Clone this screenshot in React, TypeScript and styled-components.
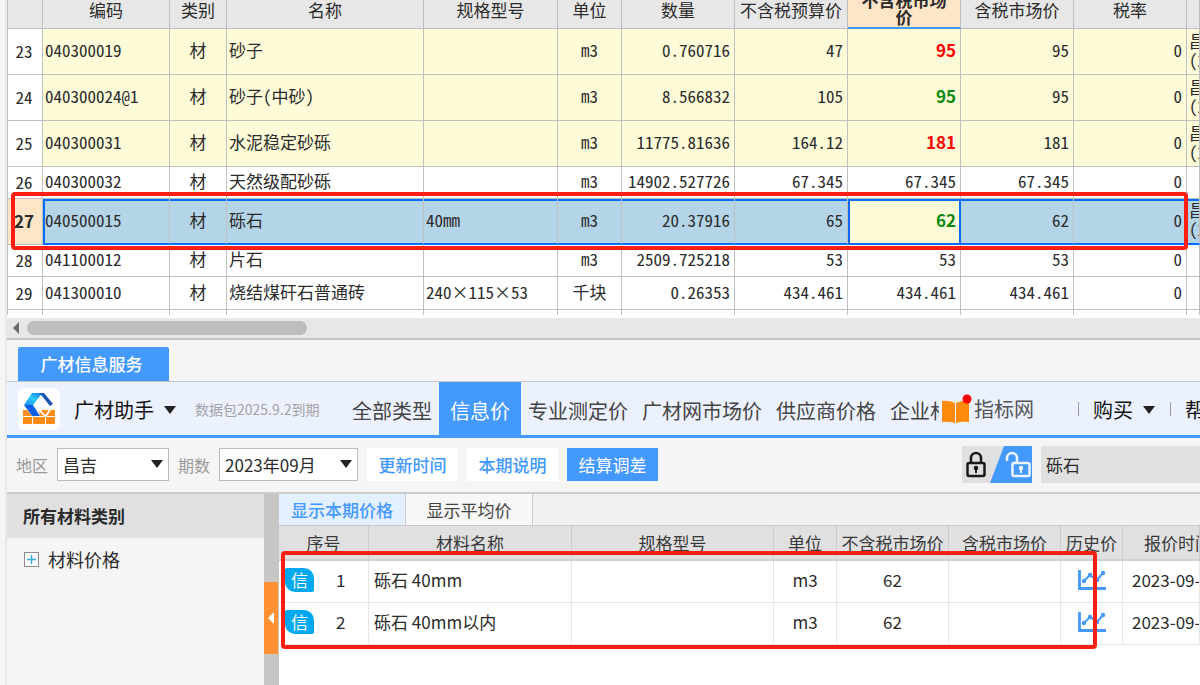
import React from 'react';
import styled, { createGlobalStyle, css } from 'styled-components';

const blue = '#4499ff';
const focus = '#0a6cff';
const grid = '#c0c0c0';

const GlobalStyle = createGlobalStyle`
  *, *::before, *::after { box-sizing: border-box; }
  body {
    margin: 0;
    background: #f5f5f5;
    color: #2b2b2b;
    font: 17px/20px "Noto Sans CJK SC", sans-serif;
    overflow: hidden;
  }
  button, input, select { font: inherit; color: inherit; border: 0; padding: 0; margin: 0; border-radius: 0; }
  button { cursor: pointer; background: none; white-space: nowrap; }
`;

const Window = styled.div`
  display: flex;
  flex-direction: column;
  min-height: 100vh;
  border-left: 5px solid #f5f5f5;
  box-shadow: inset 2px 0 #e9e9e9;
  padding-left: 2px;
  overflow: hidden;
`;

/* ---------- Quantity sheet ---------- */

const Sheet = styled.section`
  position: relative;
  overflow: hidden;
  background: #fff;
  padding-bottom: 3px;
`;

const SheetTable = styled.table`
  width: 100%;
  margin-top: -9px;
  table-layout: fixed;
  border-collapse: separate;
  border-spacing: 0;
  border-left: 1px solid ${grid};
  line-height: 19px;
  font-feature-settings: "hwid";
`;

const Col = styled.col<{ $w?: number }>`
  width: ${(p) => (p.$w ? `${p.$w}px` : 'auto')};
`;

const SheetHead = styled.th<{ $active?: boolean }>`
  height: 38px;
  padding: 0 0 1px;
  overflow: hidden;
  font-weight: 400;
  line-height: 17px;
  background: #e7e7e7;
  border-right: 1px solid ${grid};
  border-bottom: 1px solid ${grid};
  ${(p) =>
    p.$active &&
    css`
      font-weight: 700;
      background: #ffe5c8;
      border-bottom: 2px solid ${blue};
      padding: 0 10px 2px;
    `}
`;

type Tone = 'plain' | 'tinted' | 'selected';
const rowTone: Record<Tone, string> = { plain: '#fff', tinted: '#fefbd8', selected: '#b4d4e7' };

const SheetRow = styled.tr<{ $h: number; $tone: Tone }>`
  & > * {
    height: ${(p) => p.$h}px;
    background: ${(p) => rowTone[p.$tone]};
  }
  ${(p) =>
    p.$tone === 'selected' &&
    css`
      && > td {
        border-bottom: 2px solid ${focus};
        box-shadow: inset 0 2px ${focus};
      }
    `}
`;

const cellBase = css`
  padding: 0 4px 4px 2px;
  overflow: hidden;
  white-space: nowrap;
  border-right: 1px solid ${grid};
  border-bottom: 1px solid ${grid};
`;

const SheetCell = styled.td<{ $align?: 'left' | 'center' | 'right'; $first?: boolean }>`
  ${cellBase}
  text-align: ${(p) => p.$align ?? 'left'};
  ${(p) => p.$first && css`border-left: 2px solid ${focus}; padding-left: 0;`}
`;

const CenterCell = styled(SheetCell)`
  padding: 0 2px 4px;
  text-align: center;
`;

const RowNumber = styled.th<{ $active: boolean }>`
  ${cellBase}
  padding: 0 2px 2px 0;
  font-weight: 400;
  && { background: #fff; }
  ${(p) =>
    p.$active &&
    css`
      font-weight: 700;
      font-feature-settings: normal;
      && { background: #ffe5c8; }
    `}
`;

const PriceCell = styled(SheetCell)<{ $color?: string; $editing?: boolean }>`
  ${(p) =>
    p.$color &&
    css`
      color: ${p.$color};
      font-weight: 700;
      font-feature-settings: normal;
    `}
  ${(p) =>
    p.$editing &&
    css`
      &&& {
        background: #fefbd8;
        box-shadow: inset 2px 2px ${focus}, inset -1px 0 ${focus};
        border-right-color: ${focus};
      }
    `}
`;

const BlankCell = styled.td`
  height: 5px;
  padding: 0;
  border-right: 1px solid ${grid};
`;

const FullWidth = styled.span`
  display: inline-block;
  width: 17px;
  text-align: center;
`;

const Marker = styled.div`
  position: absolute;
  border: 4px solid #ff1f12;
  border-radius: 4px;
  pointer-events: none;
`;

const SheetMarker = styled(Marker)`
  left: 4px;
  right: 12px;
  top: 192px;
  height: 58px;
`;

const ScrollTrack = styled.div`
  display: flex;
  align-items: center;
  gap: 7px;
  height: 22px;
  padding-left: 5px;
  background: #e7e7e7;
  border-bottom: 2px solid #c3c3c3;
`;

const ScrollThumb = styled.div`
  width: 280px;
  height: 14px;
  border-radius: 7px;
  background: #bdbdbd;
`;

/* ---------- Info service panel ---------- */

const PanelTabs = styled.div`
  display: flex;
  align-items: flex-end;
  height: 42px;
  padding-left: 11px;
  border-bottom: 1px solid #c3c5cc;
`;

const PanelTab = styled.button`
  width: 151px;
  height: 34px;
  padding-right: 4px;
  border-radius: 2px 2px 0 0;
  background: ${blue};
  color: #fff;
  font-weight: 500;
`;

const NavBar = styled.header`
  display: flex;
  align-items: center;
  height: 56px;
  padding-left: 11px;
  background: #ecf1ff;
  border-bottom: 3px solid ${blue};
  font-size: 20px;
  white-space: nowrap;
  overflow: hidden;
`;

const LogoBox = styled.span`
  display: flex;
  flex: none;
  align-items: center;
  justify-content: center;
  width: 42px;
  height: 42px;
  border-radius: 6px;
  background: #fff;
`;

const MenuButton = styled.button`
  display: flex;
  flex: none;
  align-items: center;
  gap: 10px;
  margin-left: 14px;
  padding-top: 2px;
  color: #111;
`;

const Expiry = styled.span`
  flex: none;
  width: 150px;
  margin-left: 19px;
  font-size: 14px;
  color: #a3a3a6;
`;

const NavTabs = styled.nav`
  display: flex;
  flex: none;
  align-self: stretch;
  width: 594px;
  margin-right: 2px;
  overflow: hidden;
`;

const NavTab = styled.button<{ $active?: boolean }>`
  flex: none;
  padding: 4px ${(p) => (p.$active ? 11 : 7)}px 0;
  color: #444;
  ${(p) => p.$active && css`background: ${blue}; color: #fff;`}
`;

const IndexLink = styled.a`
  display: flex;
  flex: none;
  align-items: center;
  gap: 2px;
  color: #555;
  text-decoration: none;
`;

const NavEnd = styled.div`
  display: flex;
  flex: none;
  align-items: center;
  margin-left: 44px;
`;

const Divider = styled.span`
  width: 1px;
  height: 14px;
  background: #999;

  &:not(:first-child) { margin-left: 15px; }
`;

const Toolbar = styled.div`
  display: flex;
  align-items: center;
  height: 56px;
  padding: 0 0 1px 9px;
  gap: 9px;
  border-bottom: 2px solid #cbcbcb;
  white-space: nowrap;
`;

const FieldLabel = styled.label`
  flex: none;
  font-size: 16px;
  color: #999;
`;

const SelectWrap = styled.span<{ $w: number }>`
  position: relative;
  flex: none;
  width: ${(p) => p.$w}px;

  svg {
    position: absolute;
    right: 6px;
    top: 12px;
    pointer-events: none;
  }
`;

const Select = styled.select`
  appearance: none;
  display: block;
  width: 100%;
  height: 33px;
  padding-left: 5px;
  border: 1px solid #bcbcbc;
  background: #fff;
`;

const ToolButton = styled.button<{ $primary?: boolean }>`
  flex: none;
  width: 91px;
  height: 33px;
  background: ${(p) => (p.$primary ? blue : '#fff')};
  color: ${(p) => (p.$primary ? '#fff' : blue)};
  font-weight: ${(p) => (p.$primary ? 400 : 500)};
`;

const LockSwitch = styled.button`
  flex: none;
  width: 70px;
  height: 37px;
  margin-left: auto;
  background: #e0e0e0;

  svg { display: block; }
`;

const Search = styled.input`
  flex: none;
  width: 159px;
  height: 37px;
  padding-left: 5px;
  background: #e0e0e0;
`;

const Body = styled.div`
  display: flex;
  flex: 1;
`;

const Sidebar = styled.aside`
  flex: none;
  width: 257px;
`;

const SidebarTitle = styled.h2`
  margin: 0;
  padding: 12px 16px;
  font-size: 17px;
  line-height: 20px;
  background: #e0e0e0;
`;

const TreeItem = styled.button`
  display: flex;
  align-items: center;
  gap: 9px;
  padding: 11px 17px;
  font-size: 18px;
`;

const Splitter = styled.div`
  flex: none;
  width: 15px;
  padding-top: 88px;
  background: #c8c6c5;
`;

const Collapse = styled.button`
  display: flex;
  align-items: center;
  justify-content: center;
  width: 14px;
  height: 72px;
  background: #ff9133;
`;

const Content = styled.main`
  position: relative;
  flex: 1;
  min-width: 0;
  overflow: hidden;
  background: #fff;
`;

const ViewTabs = styled.div`
  display: flex;
  height: 32px;
  background: #f1f1f1;
  border-bottom: 1px solid #cbcbcb;
`;

const ViewTab = styled.button<{ $active?: boolean }>`
  width: 127px;
  border-right: 1px solid #cbcbcb;
  background: ${(p) => (p.$active ? '#e3f0ff' : '#f7f7f7')};
  color: ${(p) => (p.$active ? blue : '#444')};
  font-weight: ${(p) => (p.$active ? 500 : 400)};
`;

const PriceTable = styled.table`
  width: 100%;
  table-layout: fixed;
  border-collapse: separate;
  border-spacing: 0;
  white-space: nowrap;
`;

const PriceHead = styled.th<{ $indent?: boolean }>`
  height: 35px;
  padding: 0;
  font-weight: 400;
  background: #e0e0e0;
  color: #3a3a3a;
  border-right: 1px solid #cbcbcb;
  border-bottom: 2px solid #cfcfcf;
  ${(p) => p.$indent && css`text-align: left; padding-left: 21px; overflow: hidden;`}
`;

const PriceData = styled.td<{ $left?: boolean; $pad?: number }>`
  height: 42px;
  padding: 0 0 3px ${(p) => p.$pad ?? 0}px;
  overflow: hidden;
  text-align: ${(p) => (p.$left ? 'left' : 'center')};
  border-right: 1px solid #e6e6e6;
  border-bottom: 1px solid #e6e6e6;
`;

const Ordinal = styled.span`
  display: flex;
  align-items: center;
  gap: 22px;
`;

const Badge = styled.span`
  width: 29px;
  height: 24px;
  border-radius: 2px 10px 2px 10px;
  background: #00a8f0;
  color: #fff;
  line-height: 24px;
  text-align: center;
`;

const IconButton = styled.button`
  display: block;
  margin: 0 auto;

  svg { display: block; }
`;

const PriceMarker = styled(Marker)`
  left: 2px;
  top: 57px;
  width: 816px;
  height: 98px;
`;

/* ---------- Drawings ---------- */

const Caret = () => (
  <svg width="12" height="8" viewBox="0 0 12 8" aria-hidden="true">
    <path d="M0 0h12L6 8z" fill="#222" />
  </svg>
);

const Logo = () => (
  <svg width="34" height="34" viewBox="0 0 34 34" aria-hidden="true">
    <defs>
      <linearGradient id="face" x1="0" y1="1" x2="1" y2="0">
        <stop offset="0" stopColor="#1a8df5" />
        <stop offset="0.5" stopColor="#2ccbf8" />
        <stop offset="1" stopColor="#1263dc" />
      </linearGradient>
    </defs>
    <g fill="#ff8a14">
      <path d="M1 18h4l5 6H1z" />
      <path d="M1 25h9v7H1zM11 25h12v7H11zM24 25h9v7h-9z" />
      <path d="M19 18h8l-4 5z" />
      <path d="M29 18h4v6h-8z" />
      <path d="M17 19l5 5h-4z" />
    </g>
    <path d="M10 1h12l-4 3-7 9H2z" fill="url(#face)" />
    <path d="M2 13h9l7 11h-8z" fill="#0f5fe4" />
    <path d="M18 1h4l9 11-3 2-8-10z" fill="#1a52b4" />
  </svg>
);

const Book = () => (
  <svg width="31" height="32" viewBox="0 0 31 32" aria-hidden="true">
    <path d="M1 8q7-1 13 2v20q-6-2-13-1zM15 10q6-3 13-2v21q-7-1-13 1z" fill="#ff8a0c" />
    <circle cx="26" cy="6" r="4.500" fill="#ff0000" />
  </svg>
);

const Locks = () => (
  <svg width="70" height="37" viewBox="0 0 70 37" aria-hidden="true">
    <path d="M42 0h28v37H28z" fill={blue} />
    <g fill="none" strokeWidth="2.500">
      <rect x="5.500" y="17" width="17" height="13" rx="1.500" stroke="#1a1a1a" />
      <path d="M9 17v-5a5 5 0 0 1 10 0v5" stroke="#1a1a1a" />
      <rect x="50.500" y="17" width="17" height="13" rx="1.500" stroke="#eaf4ff" />
      <path d="M45 15v-3a5 5 0 0 1 10 0v5" stroke="#eaf4ff" />
    </g>
    <g fill="#1a1a1a">
      <circle cx="14" cy="22" r="2.300" />
      <path d="M13 22h2v5h-2z" />
    </g>
    <g fill="#eaf4ff">
      <circle cx="59" cy="22" r="2.300" />
      <path d="M58 22h2v5h-2z" />
    </g>
  </svg>
);

const Trend = () => (
  <svg width="28" height="20" viewBox="0 0 28 20" aria-hidden="true">
    <path d="M1.500 0v18.500H28" fill="none" stroke={blue} strokeWidth="2.800" />
    <path d="M6 11l6-6 7 5 6-7" fill="none" stroke={blue} strokeWidth="2" />
    <g fill={blue}>
      <circle cx="6" cy="11" r="2.200" />
      <circle cx="12" cy="5" r="2.200" />
      <circle cx="19" cy="10" r="2.200" />
      <circle cx="25" cy="3" r="2.200" />
    </g>
  </svg>
);

const Plus = () => (
  <svg width="15" height="15" viewBox="0 0 15 15" aria-hidden="true">
    <rect x="0.500" y="0.500" width="14" height="14" fill="#fafafa" stroke="#8c8c8c" />
    <path d="M3 7.500h9M7.500 3v9" stroke="#35aee2" strokeWidth="1.400" />
  </svg>
);

/* ---------- Data ---------- */

type Item = {
  no: number;
  code: string;
  name: string;
  spec?: string;
  unit: string;
  qty: string;
  budget: string;
  market: string;
  taxed: string;
  color?: string;
  source?: boolean;
  h: number;
  tone: Tone;
};

const red = '#ff0000';
const green = '#0a8a0a';

const items: Item[] = [
  { no: 23, code: '040300019', name: '砂子', unit: 'm3', qty: '0.760716', budget: '47', market: '95', taxed: '95', color: red, source: true, h: 46, tone: 'tinted' },
  { no: 24, code: '040300024@1', name: '砂子(中砂)', unit: 'm3', qty: '8.566832', budget: '105', market: '95', taxed: '95', color: green, source: true, h: 46, tone: 'tinted' },
  { no: 25, code: '040300031', name: '水泥稳定砂砾', unit: 'm3', qty: '11775.81636', budget: '164.12', market: '181', taxed: '181', color: red, source: true, h: 46, tone: 'tinted' },
  { no: 26, code: '040300032', name: '天然级配砂砾', unit: 'm3', qty: '14902.527726', budget: '67.345', market: '67.345', taxed: '67.345', h: 32, tone: 'plain' },
  { no: 27, code: '040500015', name: '砾石', spec: '40mm', unit: 'm3', qty: '20.37916', budget: '65', market: '62', taxed: '62', color: green, source: true, h: 46, tone: 'selected' },
  { no: 28, code: '041100012', name: '片石', unit: 'm3', qty: '2509.725218', budget: '53', market: '53', taxed: '53', h: 32, tone: 'plain' },
  { no: 29, code: '041300010', name: '烧结煤矸石普通砖', spec: '240×115×53', unit: '千块', qty: '0.26353', budget: '434.461', market: '434.461', taxed: '434.461', h: 33, tone: 'plain' },
];

const sheetCols = [35, 127, 57, 197, 134, 64, 113, 113, 113, 113, 113];
const sheetHeads = ['', '编码', '类别', '名称', '规格型号', '单位', '数量', '不含税预算价', '不含税市场价', '含税市场价', '税率', ''];

const priceCols = [90, 203, 202, 63, 112, 112, 62];
const priceHeads = ['序号', '材料名称', '规格型号', '单位', '不含税市场价', '含税市场价', '历史价', '报价时间'];
const prices = [
  { no: 1, name: '砾石 40mm' },
  { no: 2, name: '砾石 40mm以内' },
];

const Spec = ({ text }: { text: string }) => (
  <>
    {text.split('×').map((part, i) => (
      <React.Fragment key={i}>
        {i > 0 && <FullWidth>×</FullWidth>}
        {part}
      </React.Fragment>
    ))}
  </>
);

export default function App() {
  return (
    <Window>
      <GlobalStyle />
      <Sheet>
        <SheetTable>
          <colgroup>
            {sheetCols.map((w, i) => <Col key={i} $w={w} />)}
            <Col />
          </colgroup>
          <thead>
            <tr>
              {sheetHeads.map((h, i) => <SheetHead key={i} $active={i === 8}>{h}</SheetHead>)}
            </tr>
          </thead>
          <tbody>
            {items.map((it) => {
              const selected = it.tone === 'selected';
              return (
                <SheetRow key={it.no} $h={it.h} $tone={it.tone}>
                  <RowNumber $active={selected}>{it.no}</RowNumber>
                  <SheetCell $first={selected}>{it.code}</SheetCell>
                  <CenterCell>材</CenterCell>
                  <SheetCell>{it.name}</SheetCell>
                  <SheetCell>{it.spec && <Spec text={it.spec} />}</SheetCell>
                  <CenterCell>{it.unit}</CenterCell>
                  <SheetCell $align="right">{it.qty}</SheetCell>
                  <SheetCell $align="right">{it.budget}</SheetCell>
                  <PriceCell $align="right" $color={it.color} $editing={selected}>{it.market}</PriceCell>
                  <SheetCell $align="right">{it.taxed}</SheetCell>
                  <SheetCell $align="right">0</SheetCell>
                  <SheetCell>{it.source && <>昌吉<br />(2023</>}</SheetCell>
                </SheetRow>
              );
            })}
            <tr>
              {sheetHeads.map((_, i) => <BlankCell key={i} />)}
            </tr>
          </tbody>
        </SheetTable>
        <SheetMarker />
      </Sheet>
      <ScrollTrack>
        <svg width="8" height="12" viewBox="0 0 8 12" aria-hidden="true">
          <path d="M7 0v12L1 6z" fill="#6b6b76" />
        </svg>
        <ScrollThumb />
      </ScrollTrack>

      <PanelTabs>
        <PanelTab>广材信息服务</PanelTab>
      </PanelTabs>
      <NavBar>
        <LogoBox><Logo /></LogoBox>
        <MenuButton>广材助手 <Caret /></MenuButton>
        <Expiry>数据包2025.9.2到期</Expiry>
        <NavTabs>
          <NavTab>全部类型</NavTab>
          <NavTab $active>信息价</NavTab>
          <NavTab>专业测定价</NavTab>
          <NavTab>广材网市场价</NavTab>
          <NavTab>供应商价格</NavTab>
          <NavTab>企业材</NavTab>
        </NavTabs>
        <IndexLink href="#index"><Book />指标网</IndexLink>
        <NavEnd>
          <Divider />
          <MenuButton>购买 <Caret /></MenuButton>
          <Divider />
          <MenuButton>帮</MenuButton>
        </NavEnd>
      </NavBar>
      <Toolbar>
        <FieldLabel htmlFor="region">地区</FieldLabel>
        <SelectWrap $w={112}>
          <Select id="region" defaultValue="昌吉"><option>昌吉</option></Select>
          <Caret />
        </SelectWrap>
        <FieldLabel htmlFor="period">期数</FieldLabel>
        <SelectWrap $w={139}>
          <Select id="period" defaultValue="2023年09月"><option>2023年09月</option></Select>
          <Caret />
        </SelectWrap>
        <ToolButton>更新时间</ToolButton>
        <ToolButton>本期说明</ToolButton>
        <ToolButton $primary>结算调差</ToolButton>
        <LockSwitch aria-label="锁定"><Locks /></LockSwitch>
        <Search aria-label="搜索" defaultValue="砾石" />
      </Toolbar>
      <Body>
        <Sidebar>
          <SidebarTitle>所有材料类别</SidebarTitle>
          <TreeItem><Plus />材料价格</TreeItem>
        </Sidebar>
        <Splitter>
          <Collapse aria-label="收起">
            <svg width="7" height="12" viewBox="0 0 7 12" aria-hidden="true">
              <path d="M6 0v12L0 6z" fill="#fff" />
            </svg>
          </Collapse>
        </Splitter>
        <Content>
          <ViewTabs>
            <ViewTab $active>显示本期价格</ViewTab>
            <ViewTab>显示平均价</ViewTab>
          </ViewTabs>
          <PriceTable>
            <colgroup>
              {priceCols.map((w, i) => <Col key={i} $w={w} />)}
              <Col />
            </colgroup>
            <thead>
              <tr>
                {priceHeads.map((h, i) => <PriceHead key={h} $indent={i === 7}>{h}</PriceHead>)}
              </tr>
            </thead>
            <tbody>
              {prices.map((p) => (
                <tr key={p.no}>
                  <PriceData $left $pad={6}><Ordinal><Badge>信</Badge>{p.no}</Ordinal></PriceData>
                  <PriceData $left $pad={5}>{p.name}</PriceData>
                  <PriceData />
                  <PriceData>m3</PriceData>
                  <PriceData>62</PriceData>
                  <PriceData />
                  <PriceData><IconButton aria-label="历史价"><Trend /></IconButton></PriceData>
                  <PriceData $left $pad={9}>2023-09-</PriceData>
                </tr>
              ))}
            </tbody>
          </PriceTable>
          <PriceMarker />
        </Content>
      </Body>
    </Window>
  );
}
